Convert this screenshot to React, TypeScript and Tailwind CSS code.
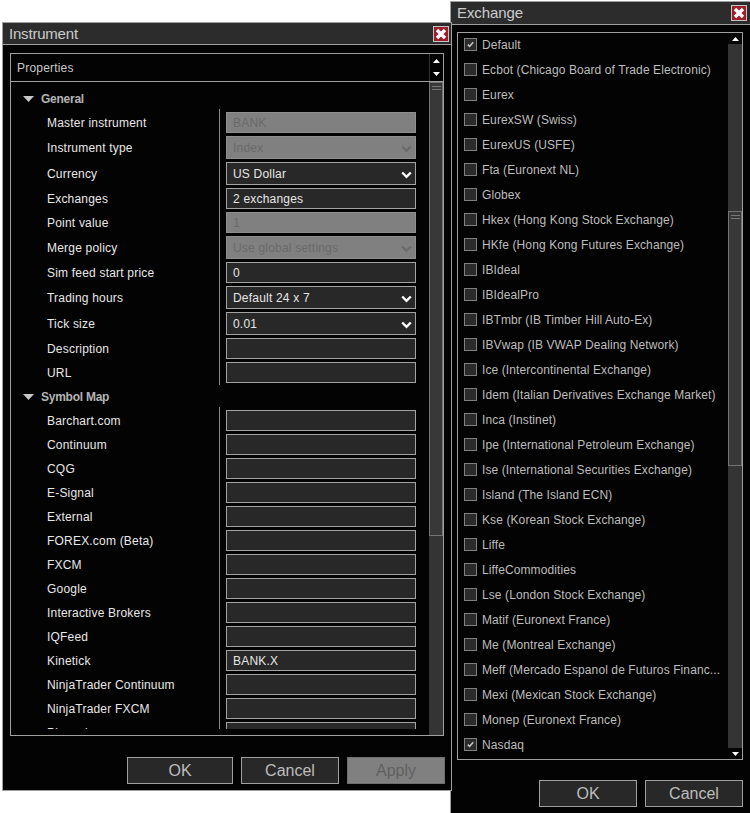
import React from "react";

const generalRows = [
  { label: "Master instrument", kind: "text", value: "BANK", disabled: true },
  { label: "Instrument type", kind: "combo", value: "Index", disabled: true },
  { label: "Currency", kind: "combo", value: "US Dollar" },
  { label: "Exchanges", kind: "text", value: "2 exchanges" },
  { label: "Point value", kind: "text", value: "1", disabled: true },
  { label: "Merge policy", kind: "combo", value: "Use global settings", disabled: true },
  { label: "Sim feed start price", kind: "text", value: "0" },
  { label: "Trading hours", kind: "combo", value: "Default 24 x 7" },
  { label: "Tick size", kind: "combo", value: "0.01" },
  { label: "Description", kind: "text", value: "" },
  { label: "URL", kind: "text", value: "" },
];

const symbolRows = [
  ["Barchart.com", ""],
  ["Continuum", ""],
  ["CQG", ""],
  ["E-Signal", ""],
  ["External", ""],
  ["FOREX.com (Beta)", ""],
  ["FXCM", ""],
  ["Google", ""],
  ["Interactive Brokers", ""],
  ["IQFeed", ""],
  ["Kinetick", "BANK.X"],
  ["NinjaTrader Continuum", ""],
  ["NinjaTrader FXCM", ""],
  ["Pinnacle", ""],
];

const exchanges = [
  "Default",
  "Ecbot (Chicago Board of Trade Electronic)",
  "Eurex",
  "EurexSW (Swiss)",
  "EurexUS (USFE)",
  "Fta (Euronext NL)",
  "Globex",
  "Hkex (Hong Kong Stock Exchange)",
  "HKfe (Hong Kong Futures Exchange)",
  "IBIdeal",
  "IBIdealPro",
  "IBTmbr (IB Timber Hill Auto-Ex)",
  "IBVwap (IB VWAP Dealing Network)",
  "Ice (Intercontinental Exchange)",
  "Idem (Italian Derivatives Exchange Market)",
  "Inca (Instinet)",
  "Ipe (International Petroleum Exchange)",
  "Ise (International Securities Exchange)",
  "Island (The Island ECN)",
  "Kse (Korean Stock Exchange)",
  "Liffe",
  "LiffeCommodities",
  "Lse (London Stock Exchange)",
  "Matif (Euronext France)",
  "Me (Montreal Exchange)",
  "Meff (Mercado Espanol de Futuros Financ...",
  "Mexi (Mexican Stock Exchange)",
  "Monep (Euronext France)",
  "Nasdaq",
];

function CloseButton() {
  return (
    <div className="w-[16px] h-[16px] bg-[#9c1f29] border border-[#c4c4c4] flex items-center justify-center">
      <svg width="14" height="14" viewBox="0 0 14 14">
        <path d="M3 3 L11 11 M11 3 L3 11" stroke="#ffffff" strokeWidth="3.4" />
      </svg>
    </div>
  );
}

function Triangle({ up }: { up?: boolean }) {
  return (
    <svg width="7" height="4" viewBox="0 0 7 4">
      <path d={up ? "M0 4 L3.5 0 L7 4 Z" : "M0 0 L7 0 L3.5 4 Z"} fill="#ffffff" />
    </svg>
  );
}

function Chevron({ dim }: { dim?: boolean }) {
  return (
    <svg width="11" height="8" viewBox="0 0 11 8" className="absolute right-[3px] top-[8px]">
      <path d="M1.2 1.5 L5.5 5.8 L9.8 1.5" fill="none" stroke={dim ? "#6b6b6b" : "#ffffff"} strokeWidth="2.4" />
    </svg>
  );
}

function Field({ kind, value, disabled }: { kind: string; value: string; disabled?: boolean }) {
  const combo = kind === "combo";
  return (
    <div
      className={`relative w-[190px] mb-[1px] flex items-center pl-[6px] text-[12px] ${combo ? "h-[23px]" : "h-[21px]"} border ${
        disabled ? "bg-[#808080] border-[#8f8f8f] text-[#6a6a6a]" : "bg-[#282828] border-[#a3a3a3] text-[#e6e6e6]"
      }`}
    >
      <span className="tracking-[0.2px]">{value}</span>
      {combo && <Chevron dim={disabled} />}
    </div>
  );
}

function Row({
  label,
  kind,
  value,
  disabled,
  first,
}: {
  label: string;
  kind: string;
  value: string;
  disabled?: boolean;
  first?: boolean;
}) {
  const combo = kind === "combo";
  return (
    <div className={`flex items-center ${combo ? "h-[26px]" : "h-[24px]"}`}>
      <div className="w-[208px] pl-[36px] text-[12px] text-[#e8e8e8] tracking-[0.2px] whitespace-nowrap">{label}</div>
      <div className={`w-[7px] self-stretch border-l border-[#8a8a8a] ${first ? "-mt-[2px]" : ""}`} />
      <Field kind={kind} value={value} disabled={disabled} />
    </div>
  );
}

function Section({ title }: { title: string }) {
  return (
    <div className="h-[24px] flex items-center pl-[12px] text-[12px] font-bold tracking-[-0.25px] text-[#b4b4b4]">
      <svg width="11" height="6" viewBox="0 0 11 6" className="mr-[7px]">
        <path d="M0 0 L11 0 L5.5 6 Z" fill="#c8c8c8" />
      </svg>
      {title}
    </div>
  );
}

function Btn({ label, width, disabled }: { label: string; width: string; disabled?: boolean }) {
  return (
    <div
      className={`h-[27px] flex items-center justify-center border text-[16px] ${width} ${
        disabled ? "bg-[#808080] border-[#6e6e6e] text-[#606060]" : "bg-[#282828] border-[#a0a0a0] text-[#bdbdbd]"
      }`}
    >
      {label}
    </div>
  );
}

function Thumb({ height }: { height: string }) {
  return (
    <div className={`${height} bg-[#383838] border border-[#747474] flex flex-col items-center pt-[3px] gap-[2px]`}>
      <div className="w-[9px] h-px bg-[#777777]" />
      <div className="w-[9px] h-px bg-[#777777]" />
    </div>
  );
}

function InstrumentWindow() {
  return (
    <div className="absolute left-[2px] top-[22px] w-[450px] h-[769px] bg-[#030303] border border-[#a0a0a0] flex flex-col">
      <div className="h-[22px] shrink-0 bg-[#2c2c2c] border-b border-[#a0a0a0] flex items-center justify-between pl-[6px] pr-[2px] text-[15px] tracking-[-0.2px] text-[#cccccc]">
        <span className="pt-[1px]">Instrument</span>
        <CloseButton />
      </div>
      <div className="mt-[8px] ml-[7px] w-[434px] h-[683px] border border-[#a0a0a0] flex flex-col">
        <div className="h-[28px] shrink-0 border-b border-[#a0a0a0] flex items-center justify-between pl-[6px] text-[12px] text-[#c8c8c8] tracking-[0.2px]">
          <span>Properties</span>
          <div className="w-[14px] h-full flex flex-col items-center justify-center gap-[9px] border-l border-[#333333]">
            <Triangle up />
            <Triangle />
          </div>
        </div>
        <div className="flex-1 flex min-h-0">
          <div className="flex-1 pb-[6px] min-h-0">
            <div className="h-full overflow-hidden">
              <div className="pt-[5px]">
                <Section title="General" />
                {generalRows.map((r, i) => (
                  <Row key={r.label} {...r} first={i === 0} />
                ))}
                <Section title="Symbol Map" />
                {symbolRows.map(([label, value], i) => (
                  <Row key={label} label={label} kind="text" value={value} first={i === 0} />
                ))}
              </div>
            </div>
          </div>
          <div className="w-[14px] shrink-0 bg-[#343434]">
            <Thumb height="h-[454px]" />
          </div>
        </div>
      </div>
      <div className="mt-[21px] ml-[124px] flex gap-[8px]">
        <Btn label="OK" width="w-[106px]" />
        <Btn label="Cancel" width="w-[98px]" />
        <Btn label="Apply" width="w-[98px]" disabled />
      </div>
    </div>
  );
}

function ExchangeWindow() {
  return (
    <div className="absolute left-[450px] top-[1px] w-[300px] h-[812px] bg-[#030303] border-l border-t border-[#a0a0a0] flex flex-col">
      <div className="h-[23px] shrink-0 bg-[#2c2c2c] border-b border-[#a0a0a0] flex items-center justify-between pl-[6px] pr-[3px] text-[15px] tracking-[-0.1px] text-[#cccccc]">
        <span>Exchange</span>
        <CloseButton />
      </div>
      <div className="mt-[7px] ml-[6px] w-[286px] h-[728px] border border-[#a0a0a0] flex">
        <div className="flex-1 overflow-hidden">
          <div className="-mt-[1px]">
            {exchanges.map((name) => {
              const on = name === "Default" || name === "Nasdaq";
              return (
                <div key={name} className="h-[25px] flex items-center pl-[6px] text-[12px] text-[#bdbdbd] tracking-[0.1px] whitespace-nowrap">
                  <div className="w-[13px] h-[13px] mr-[4px] border border-[#808080] bg-[#2b2b2b] flex items-center justify-center">
                    {on && (
                      <svg width="9" height="9" viewBox="0 0 9 9">
                        <path d="M1.8 4.6 L3.6 6.4 L7.2 2.2" fill="none" stroke="#c4c4c4" strokeWidth="1.6" />
                      </svg>
                    )}
                  </div>
                  <span className="ml-[1px]">{name}</span>
                </div>
              );
            })}
          </div>
        </div>
        <div className="relative w-[14px] shrink-0 bg-[#343434] flex flex-col justify-between">
          <div className="h-[11px] bg-[#050505] flex items-center justify-center">
            <Triangle up />
          </div>
          <div className="absolute left-0 right-0 top-[178px]">
            <Thumb height="h-[255px]" />
          </div>
          <div className="h-[11px] bg-[#050505] flex items-center justify-center">
            <Triangle />
          </div>
        </div>
      </div>
      <div className="mt-[20px] ml-[88px] flex gap-[8px]">
        <Btn label="OK" width="w-[98px]" />
        <Btn label="Cancel" width="w-[98px]" />
      </div>
    </div>
  );
}

export default function App() {
  return (
    <div className="relative w-[750px] h-[813px] bg-white overflow-hidden font-['Liberation_Sans',Arial,sans-serif]">
      <ExchangeWindow />
      <InstrumentWindow />
    </div>
  );
}
